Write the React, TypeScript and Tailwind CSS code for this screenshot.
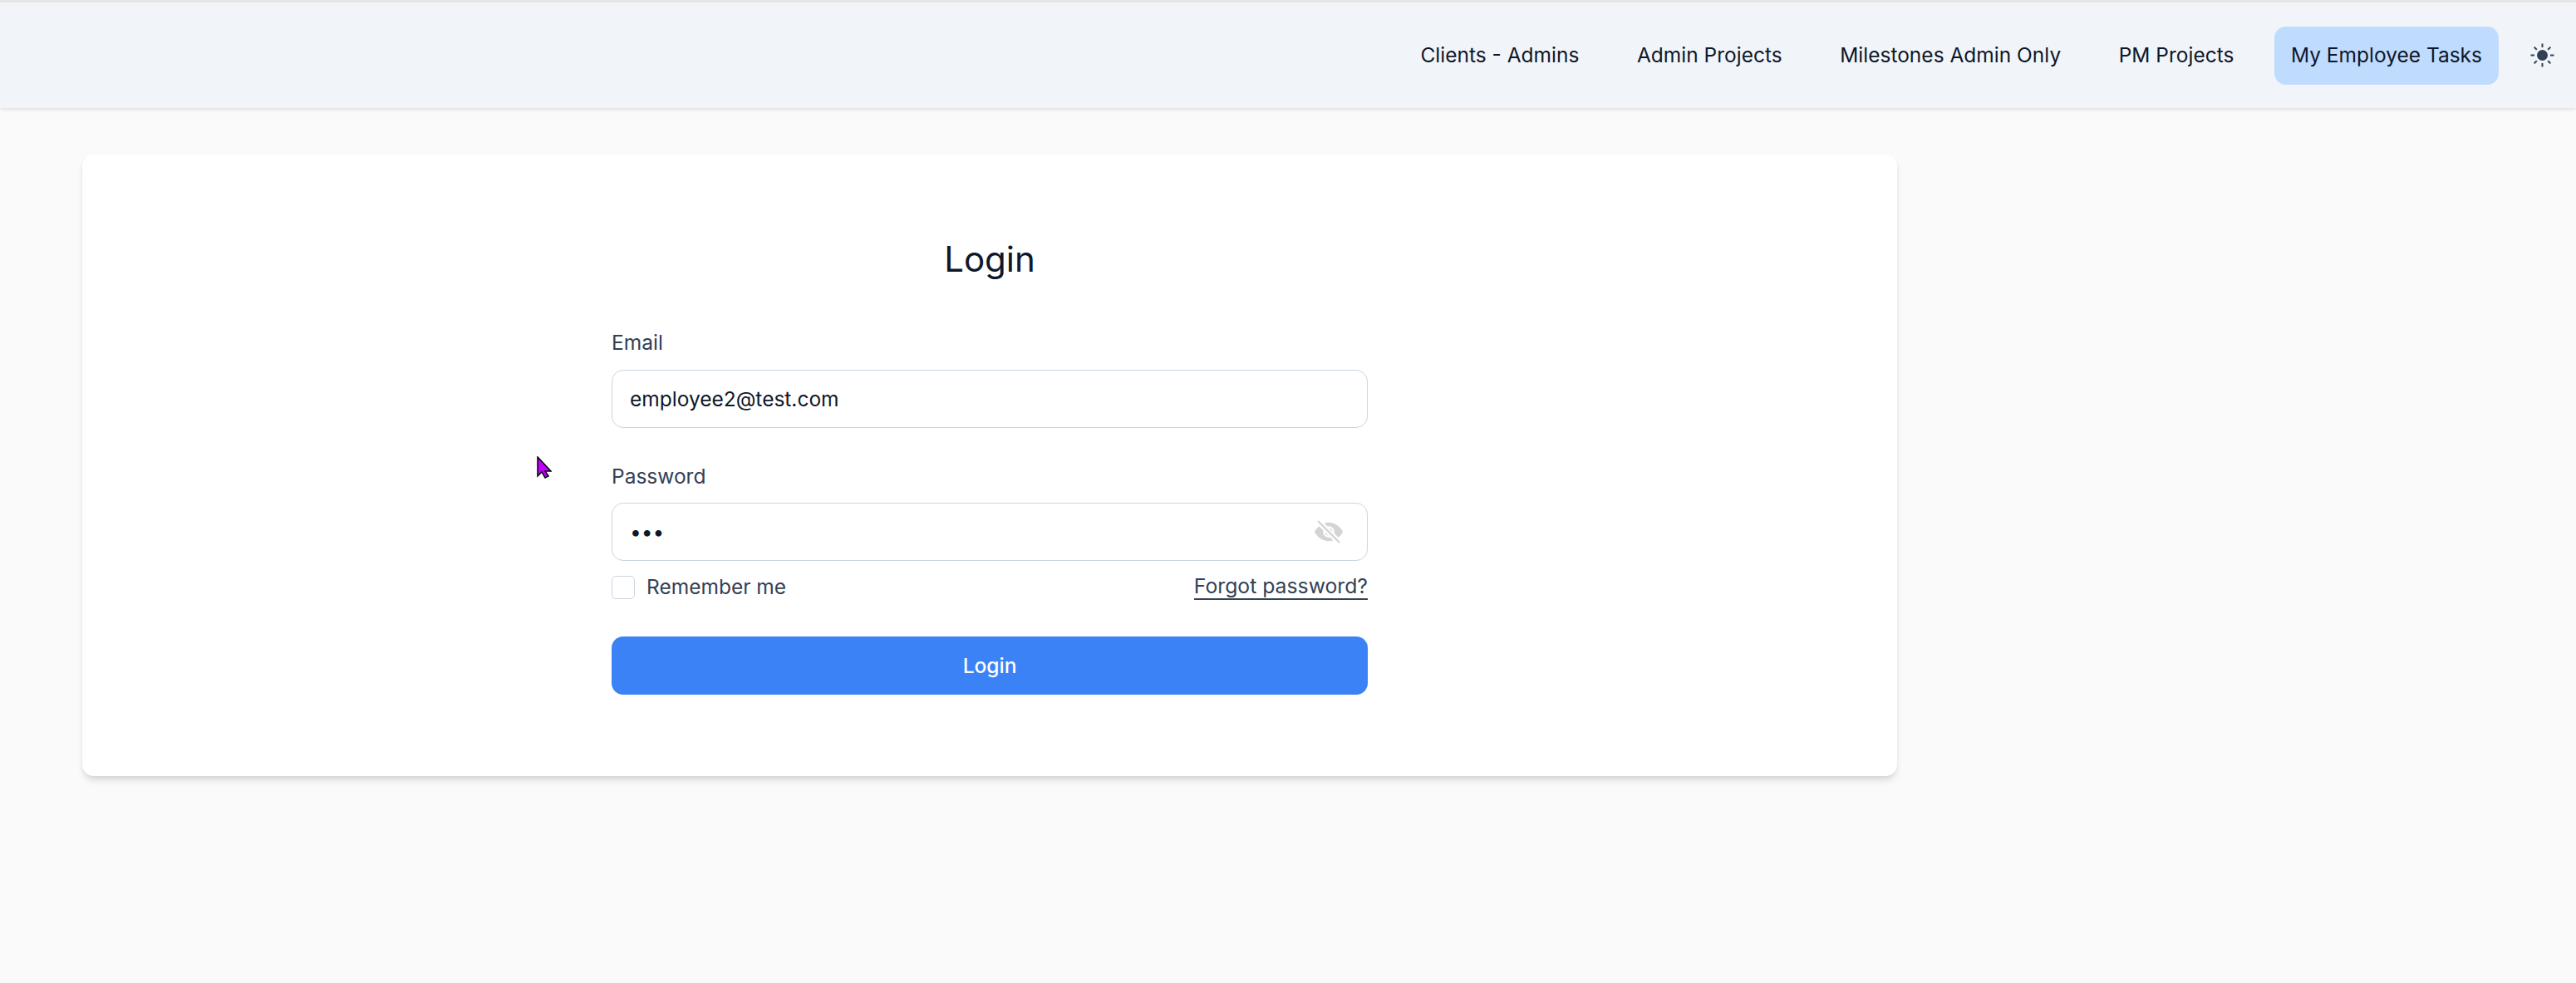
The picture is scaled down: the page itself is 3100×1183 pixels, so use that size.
import { IoEyeOff } from "react-icons/io5";

const navItems = ["Clients - Admins", "Admin Projects", "Milestones Admin Only", "PM Projects"];

function SunIcon() {
  return (
    <svg width="29" height="29" viewBox="0 0 29 29" className="text-[#334155]">
      <circle cx="14.5" cy="14.5" r="6.5" fill="currentColor" />
      <g stroke="currentColor" strokeWidth="2">
        <path d="M14.5 0.5v4.5M14.5 24v4.5M0.5 14.5h4.5M24 14.5h4.5" />
        <path d="M4.6 4.6l3.2 3.2M21.2 21.2l3.2 3.2M4.6 24.4l3.2-3.2M21.2 7.8l3.2-3.2" />
      </g>
    </svg>
  );
}

export default function App() {
  return (
    <div className="min-h-[1183px] bg-[#fafafa] font-['Inter',sans-serif] text-[24.5px] relative">
      <header className="h-[130px] border-t-[3px] border-[#e5e5e5] bg-[#f1f5f9] shadow-[0_1px_5px_rgba(0,0,0,0.15)] flex items-center justify-end pr-[26px] text-[#0f172a]">
        <nav className="flex items-center">
          {navItems.map((item) => (
            <a key={item} className="h-[70px] px-[21px] mr-[27.5px] rounded-[14px] flex items-center whitespace-nowrap">
              {item}
            </a>
          ))}
          <a className="h-[70px] px-[20px] rounded-[14px] bg-[#bfdbfe] flex items-center whitespace-nowrap">
            My Employee Tasks
          </a>
        </nav>
        <div className="ml-[38px] flex">
          <SunIcon />
        </div>
      </header>

      <main className="pt-[56px] pl-[99px]">
        <section className="w-[2184px] h-[748px] bg-white rounded-[14px] shadow-[0_7px_10px_-2px_rgba(0,0,0,0.1),0_3px_7px_-2px_rgba(0,0,0,0.1)] pt-[98px]">
          <div className="w-[910px] mx-auto">
            <h1 className="text-[42px] leading-[56px] text-center text-[#0f172a] mb-[55px]">Login</h1>

            <label className="block text-[#334155] leading-[35px] mb-[15px]">Email</label>
            <div className="h-[70px] rounded-[14px] border border-[#cbd5e1] px-[21px] flex items-center text-[#0f172a]">
              employee2@test.com
            </div>

            <label className="block text-[#334155] leading-[35px] mt-[41px] mb-[14px]">Password</label>
            <div className="h-[70px] rounded-[14px] border border-[#cbd5e1] px-[21px] flex items-center justify-between text-[#0f172a]">
              <span>•••</span>
              <IoEyeOff className="text-[#d6d3d6] text-[36px] mr-[7px]" />
            </div>

            <div className="flex items-center justify-between mt-[14px] h-[35px] text-[#334155]">
              <span className="flex items-center">
                <span className="w-[28px] h-[28px] rounded-[5px] border border-[#cbd5e1] bg-white mr-[14px]"></span>
                Remember me
              </span>
              <a className="border-b-2 border-[#334155] leading-[29px] text-[24.75px]">Forgot password?</a>
            </div>

            <button className="block w-full h-[70px] mt-[42px] rounded-[14px] bg-[#3b82f6] text-white font-medium">
              Login
            </button>
          </div>
        </section>
      </main>

      {/* stray mouse pointer captured in the screenshot */}
      <svg width="18" height="28" viewBox="0 0 18 28" className="absolute left-[646px] top-[549px]">
        <path d="M1 1v23l5-5 4 7 4-2-4-6h7z" fill="#bf00ff" stroke="#000" strokeWidth="1.5" />
      </svg>
    </div>
  );
}
